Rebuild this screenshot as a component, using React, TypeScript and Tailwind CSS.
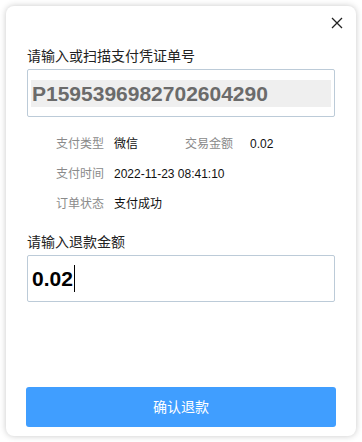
import React from 'react';

const font = { fontFamily: '"Liberation Sans", "Noto Sans CJK SC", sans-serif' };

const InfoRow: React.FC<{ items: [string, string][] }> = ({ items }) => (
  <div className="flex h-[30px] items-center text-[12px]">
    <span className="w-[58px] shrink-0 text-[#8a8a8a]">{items[0][0]}</span>
    <span className={`${items.length > 1 ? 'w-[71px]' : ''} shrink-0 text-[#111]`}>{items[0][1]}</span>
    {items[1] && (
      <>
        <span className="w-[65px] shrink-0 text-[#8a8a8a]">{items[1][0]}</span>
        <span className="text-[#111]">{items[1][1]}</span>
      </>
    )}
  </div>
);

export default function App() {
  return (
    <div className="min-h-[442px] w-[362px] bg-white p-[6px]" style={font}>
      <div className="relative flex h-[430px] flex-col rounded-lg bg-white px-[21px] pb-[9px] pt-[40px] shadow-[0_0_6px_rgba(0,0,0,0.22)]">
        <button className="absolute right-[13px] top-[11px] flex h-[12px] w-[12px] items-center justify-center text-[#222]">
          <svg viewBox="0 0 12 12" width="12" height="12" fill="none" stroke="currentColor" strokeWidth="1.3">
            <path d="M1 1l10 10M11 1L1 11" />
          </svg>
        </button>

        <div className="text-[14px] leading-[20px] text-[#222]">请输入或扫描支付凭证单号</div>
        <div className="mt-[3px] h-[48px] rounded-[2px] border border-[#bccbd8] px-[3px] pt-[10px]">
          <div className="flex h-[27px] items-center bg-[#efefef] pl-[1px] text-[21px] font-bold text-[#6b6b6b]">
            P1595396982702604290
          </div>
        </div>

        <div className="mt-[12px] pl-[29px]">
          <InfoRow items={[['支付类型', '微信'], ['交易金额', '0.02']]} />
          <InfoRow items={[['支付时间', '2022-11-23 08:41:10']]} />
          <InfoRow items={[['订单状态', '支付成功']]} />
        </div>

        <div className="mt-[13px] text-[14px] leading-[20px] text-[#222]">请输入退款金额</div>
        <div className="mt-[3px] flex h-[47px] items-center rounded-[2px] border border-[#bccbd8] pl-[4px]">
          <span className="text-[21px] font-bold text-black">0.02</span>
          <span className="ml-px h-[27px] w-px bg-black" />
        </div>

        <button className="-mx-px mt-auto h-[40px] rounded-[3px] bg-[#409eff] text-[14px] text-white">
          确认退款
        </button>
      </div>
    </div>
  );
}
